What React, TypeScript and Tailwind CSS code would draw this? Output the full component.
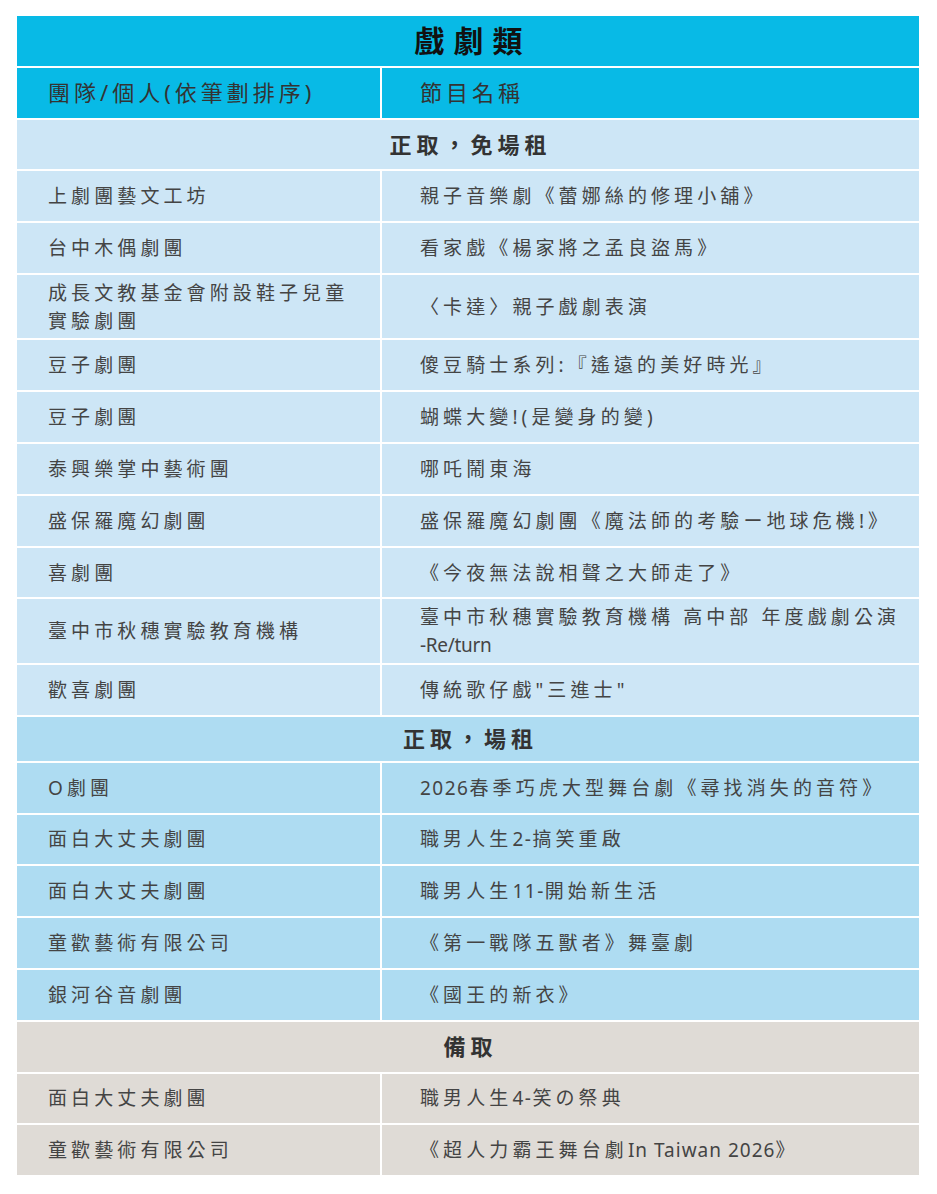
import React from 'react'

type Row = { team: React.ReactNode; show: React.ReactNode; tall?: boolean }

// Latin runs in the original are set tighter than the CJK text
const L = ({ children }: { children: React.ReactNode }) => <span className="tracking-[1.5px]">{children}</span>

const sections: { title: string; bg: string; titleH: string; rows: Row[] }[] = [
  {
    title: '正取，免場租',
    bg: 'bg-[#cde6f6]',
    titleH: 'h-[49.8px]',
    rows: [
      { team: '上劇團藝文工坊', show: '親子音樂劇《蕾娜絲的修理小舖》' },
      { team: '台中木偶劇團', show: '看家戲《楊家將之孟良盜馬》' },
      {
        team: (
          <>
            成長文教基金會附設鞋子兒童
            <br />
            實驗劇團
          </>
        ),
        show: '〈卡達〉親子戲劇表演',
        tall: true,
      },
      { team: '豆子劇團', show: '傻豆騎士系列:『遙遠的美好時光』' },
      { team: '豆子劇團', show: '蝴蝶大變!(是變身的變)' },
      { team: '泰興樂掌中藝術團', show: '哪吒鬧東海' },
      { team: '盛保羅魔幻劇團', show: '盛保羅魔幻劇團《魔法師的考驗ー地球危機!》' },
      { team: '喜劇團', show: '《今夜無法說相聲之大師走了》' },
      {
        team: '臺中市秋穗實驗教育機構',
        show: (
          <>
            臺中市秋穗實驗教育機構 高中部 年度戲劇公演
            <br />
            <span className="tracking-[-0.3px]">-Re/turn</span>
          </>
        ),
        tall: true,
      },
      { team: '歡喜劇團', show: '傳統歌仔戲"三進士"' },
    ],
  },
  {
    title: '正取，場租',
    bg: 'bg-[#aedcf2]',
    titleH: 'h-[44px]',
    rows: [
      { team: 'O劇團', show: <><L>2026</L>春季巧虎大型舞台劇《尋找消失的音符》</> },
      { team: '面白大丈夫劇團', show: <>職男人生<L>2-</L>搞笑重啟</> },
      { team: '面白大丈夫劇團', show: <>職男人生<L>11-</L>開始新生活</> },
      { team: '童歡藝術有限公司', show: '《第一戰隊五獸者》舞臺劇' },
      { team: '銀河谷音劇團', show: '《國王的新衣》' },
    ],
  },
  {
    title: '備取',
    bg: 'bg-[#dfdbd6]',
    titleH: 'h-[49.8px]',
    rows: [
      { team: '面白大丈夫劇團', show: <>職男人生<L>4-</L>笑の祭典</> },
      {
        team: '童歡藝術有限公司',
        show: (
          <>
            《超人力霸王舞台劇<span className="tracking-[1px]">In Taiwan 2026</span>》
          </>
        ),
      },
    ],
  },
]

export default function App() {
  return (
    <div className="min-h-screen bg-white pl-[17px] pr-[18px] pt-[16px] font-['Noto_Sans','Noto_Sans_CJK_TC',sans-serif] text-[#444]">
      <div className="flex flex-col gap-[2px]">
        {/* Title */}
        <div className="flex h-[49.8px] items-center justify-center bg-[#08bae6] pl-[10px] text-[30px] font-bold tracking-[9px] text-[#111]">
          戲劇類
        </div>

        {/* Column headers */}
        <div className="grid grid-cols-[363px_1fr] gap-[2px] text-[22px] tracking-[4px] text-[#333]">
          <div className="flex h-[49.8px] items-center bg-[#08bae6] pl-[31px]">團隊/個人(依筆劃排序)</div>
          <div className="flex h-[49.8px] items-center bg-[#08bae6] pl-[38px]">節目名稱</div>
        </div>

        {sections.map((sec) => (
          <React.Fragment key={sec.title}>
            <div
              className={`flex ${sec.titleH} items-center justify-center ${sec.bg} pl-[5px] text-[22px] font-bold tracking-[5px] text-[#333]`}
            >
              {sec.title}
            </div>
            {sec.rows.map((r, i) => (
              <div key={i} className="grid grid-cols-[363px_1fr] gap-[2px] text-[19px] leading-[28px] tracking-[4.1px]">
                <div className={`flex ${r.tall ? 'h-[63.5px]' : 'h-[49.8px]'} items-center ${sec.bg} pl-[31px]`}>
                  <div>{r.team}</div>
                </div>
                <div className={`flex ${r.tall ? 'h-[63.5px]' : 'h-[49.8px]'} items-center ${sec.bg} pl-[38px]`}>
                  <div>{r.show}</div>
                </div>
              </div>
            ))}
          </React.Fragment>
        ))}
      </div>
    </div>
  )
}
